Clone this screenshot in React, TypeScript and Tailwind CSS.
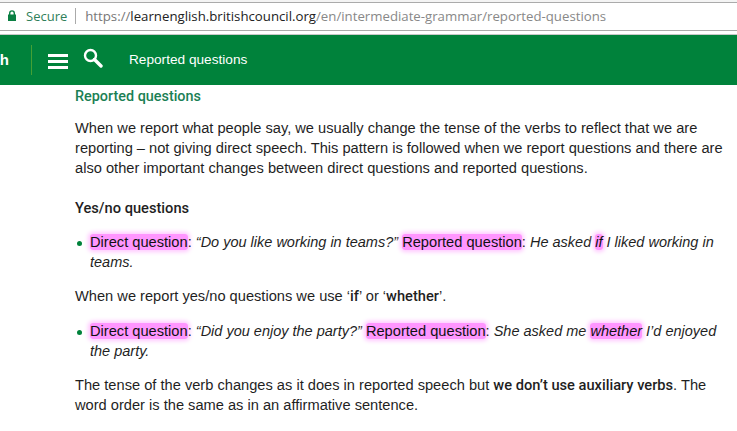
const H = ({ children }: { children: React.ReactNode }) => (
  <span className="rounded-[3px] bg-[#ff96ff] shadow-[0_0_4px_2px_#ffc8ff] text-[#111]">{children}</span>
);
const B = ({ children }: { children: React.ReactNode }) => (
  <b className="font-['Roboto',sans-serif] font-medium leading-none">{children}</b>
);
const I = ({ children }: { children: React.ReactNode }) => (
  <em className="text-[14.5px]">{children}</em>
);

export default function App() {
  return (
    <div className="w-[737px] h-[431px] overflow-hidden bg-white font-['Liberation_Sans',sans-serif] text-[14.65px] leading-[20px] text-[#1f1f1f]">
      <div className="h-[35px] bg-white flex flex-col">
        <div className="h-[2px] bg-[#f4f4f4]" />
        <div className="h-[27px] border-y border-[#ababab] flex items-center pl-[8px] font-['Open_Sans',sans-serif] text-[13.23px] leading-[16px] box-content">
          <svg width="8" height="11" viewBox="0 0 8 11" className="mr-[10px] -mt-[2px]">
            <path d="M1.7 5V3.2a2.3 2.3 0 0 1 4.6 0V5" fill="none" stroke="#0b8043" strokeWidth="1.4" />
            <rect x="0" y="4.5" width="8" height="6.5" fill="#0b8043" />
          </svg>
          <span className="text-[#2f7f5a] text-[13px] -mt-[2px]">Secure</span>
          <span className="w-px h-[16px] bg-[#aaa] ml-[8px] mr-[9px] -mt-[2px]" />
          <span className="text-[#777] -mt-[2px]">https://</span>
          <span className="text-[#222] -mt-[2px]">learnenglish.britishcouncil.org</span>
          <span className="text-[#888] -mt-[2px]">/en/intermediate-grammar/reported-questions</span>
        </div>
        <div className="flex-1 bg-white border-b border-[#c8c8c8]" />
      </div>
      <div className="h-[50px] bg-[#00823b] flex items-center text-white">
        <span className="font-bold text-[15px] w-[9px] text-right shrink-0 overflow-hidden flex justify-end">h</span>
        <span className="w-px h-[30px] bg-[#45a035] ml-[22px]" />
        <svg width="20" height="15" viewBox="0 0 20 15" className="ml-[16px] mt-[3px]" fill="#fff">
          <rect y="0" width="20" height="3" />
          <rect y="6" width="20" height="3" />
          <rect y="12" width="20" height="3" />
        </svg>
        <svg width="20" height="20" viewBox="0 0 20 20" className="ml-[15px] -mt-[4px]" fill="none" stroke="#fff">
          <circle cx="7.5" cy="7.5" r="5.5" strokeWidth="2.4" />
          <path d="M11.5 11.5L18 18" strokeWidth="3.4" strokeLinecap="round" />
        </svg>
        <span className="ml-[26px] text-[13.65px]">Reported questions</span>
      </div>
      <div className="pl-[75px] pr-[6px]">
        <h1 className="text-[#1b7f55] text-[14.4px] leading-[20px] mt-[1px]"><B>Reported questions</B></h1>
        <p className="mt-[12px]">
          When we report what people say, we usually change the tense of the verbs to reflect that we are reporting – not giving direct speech. This pattern is followed when we report questions and there are also other important changes between direct questions and reported questions.
        </p>
        <h2 className="mt-[20px]"><B>Yes/no questions</B></h2>
        <ul className="mt-[14px]">
          <li className="relative pl-[15px]">
            <span className="absolute left-[2px] top-[9px] w-[5px] h-[5px] rounded-full bg-[#00823b]" />
            <H>Direct question</H>: <I>“Do you like working in teams?”</I> <H>Reported question</H>: <I>He asked <H>if</H> I liked working in teams.</I>
          </li>
        </ul>
        <p className="mt-[14px]">
          When we report yes/no questions we use ‘<B>if</B>’ or ‘<B>whether</B>’.
        </p>
        <ul className="mt-[15px]">
          <li className="relative pl-[15px]">
            <span className="absolute left-[2px] top-[9px] w-[5px] h-[5px] rounded-full bg-[#00823b]" />
            <H>Direct question</H>: <I>“Did you enjoy the party?”</I> <H>Reported question</H>: <I>She asked me <H>whether</H> I’d enjoyed the party.</I>
          </li>
        </ul>
        <p className="mt-[14px]">
          The tense of the verb changes as it does in reported speech but <B>we don’t use auxiliary verbs</B>. The word order is the same as in an affirmative sentence.
        </p>
      </div>
    </div>
  );
}
